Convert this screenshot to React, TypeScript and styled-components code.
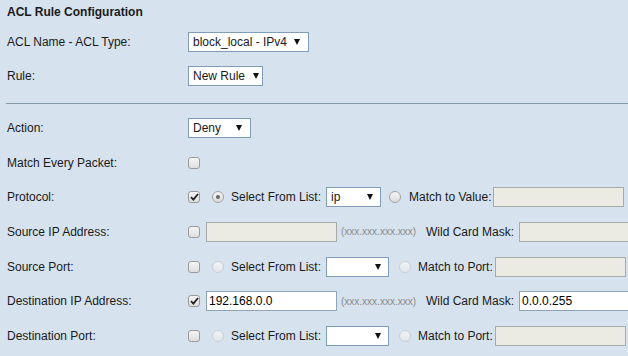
import styled, { createGlobalStyle } from "styled-components"

const GlobalStyle = createGlobalStyle`
  html, body {
    margin: 0;
    padding: 0;
    background: #d6e2ee;
    overflow: hidden;
  }
  body {
    font-family: "Liberation Sans", Arial, sans-serif;
    font-size: 12px;
    color: #1a1a1a;
  }
`

const Page = styled.div`
  width: 628px;
  height: 356px;
  padding-left: 7px;
  box-sizing: border-box;
  overflow: hidden;
`

const Title = styled.div`
  font-weight: bold;
  line-height: 24px;
  height: 25px;
`

const Row = styled.div<{ $h?: number }>`
  display: flex;
  align-items: center;
  height: ${(p) => p.$h ?? 34.67}px;
  white-space: nowrap;
`

const Label = styled.div`
  width: 181px;
  flex: none;
`

const Controls = styled.div`
  display: flex;
  align-items: center;
`

const Divider = styled.div`
  height: 1px;
  background: #8598a8;
  margin: 10px 0 6.67px -1px;
`

const SelectBox = styled.div<{ $w: number; $ml?: number; $pr?: number }>`
  display: flex;
  align-items: center;
  justify-content: space-between;
  box-sizing: border-box;
  width: ${(p) => p.$w}px;
  height: 20px;
  margin-left: ${(p) => p.$ml ?? 0}px;
  padding: 0 ${(p) => p.$pr ?? 7}px 0 4px;
  background: #fff;
  border: 1px solid #7f9db9;
  flex: none;
`

const Arrow = styled.span`
  width: 0;
  height: 0;
  border-left: 3px solid transparent;
  border-right: 3px solid transparent;
  border-top: 6px solid #111;
`

const Box = styled.span<{ $ml?: number }>`
  display: inline-flex;
  align-items: center;
  justify-content: center;
  box-sizing: border-box;
  width: 12px;
  height: 12px;
  margin-left: ${(p) => p.$ml ?? 0}px;
  border: 1px solid #9a9a9a;
  border-radius: 3px;
  background: linear-gradient(#f6f6f6, #dedede);
  flex: none;
`

const Round = styled.span<{ $on?: boolean; $off?: boolean; $ml?: number }>`
  display: inline-flex;
  align-items: center;
  justify-content: center;
  box-sizing: border-box;
  width: 12px;
  height: 12px;
  margin-left: ${(p) => p.$ml ?? 0}px;
  border-radius: 50%;
  border: 1px solid ${(p) => (p.$off ? "#c9cfd6" : "#a3a3a3")};
  background: ${(p) =>
    p.$off ? "linear-gradient(#f0f3f6, #e2e7ec)" : "linear-gradient(#f6f6f6, #dcdcdc)"};
  flex: none;

  &::after {
    content: "";
    display: ${(p) => (p.$on ? "block" : "none")};
    width: 4px;
    height: 4px;
    border-radius: 50%;
    background: #666;
  }
`

const Text = styled.span<{ $ml?: number }>`
  margin-left: ${(p) => p.$ml ?? 0}px;
  flex: none;
`

const Hint = styled.span`
  margin-left: 4px;
  font-size: 10px;
  color: #8a8a8a;
  flex: none;
`

const Field = styled.div<{ $ml?: number; $off?: boolean }>`
  box-sizing: border-box;
  width: 131px;
  height: 20px;
  margin-left: ${(p) => p.$ml ?? 0}px;
  padding-left: 2px;
  line-height: 18px;
  border: 1px solid ${(p) => (p.$off ? "#a9aaa8" : "#8ea3b6")};
  background: ${(p) => (p.$off ? "#ebebe4" : "#fff")};
  color: #000;
  flex: none;
`

function Select({ w, value, ml, pr }: { w: number; value?: string; ml?: number; pr?: number }) {
  return (
    <SelectBox $w={w} $ml={ml} $pr={pr}>
      <span>{value}</span>
      <Arrow />
    </SelectBox>
  )
}

function Check({ on, ml }: { on?: boolean; ml?: number }) {
  return (
    <Box $ml={ml}>
      {on && (
        <svg width="9" height="8" viewBox="0 0 9 8">
          <path d="M1 4.2 L3.4 6.6 L8 1" fill="none" stroke="#222" strokeWidth="1.8" />
        </svg>
      )}
    </Box>
  )
}

function PortRow({ label }: { label: string }) {
  return (
    <Row>
      <Label>{label}</Label>
      <Controls>
        <Check />
        <Round $off $ml={12} />
        <Text $ml={7}>Select From List:</Text>
        <Select w={63} ml={5} />
        <Round $off $ml={10} />
        <Text $ml={7}>Match to Port:</Text>
        <Field $off $ml={2} />
      </Controls>
    </Row>
  )
}

function AddressRow({ label, on, ip, mask }: { label: string; on?: boolean; ip?: string; mask?: string }) {
  return (
    <Row>
      <Label>{label}</Label>
      <Controls>
        <Check on={on} />
        <Field $off={!on} $ml={6}>
          {ip}
        </Field>
        <Hint>(xxx.xxx.xxx.xxx)</Hint>
        <Text $ml={10}>Wild Card Mask:</Text>
        <Field $off={!on} $ml={5}>
          {mask}
        </Field>
      </Controls>
    </Row>
  )
}

export default function App() {
  return (
    <Page>
      <GlobalStyle />
      <Title>ACL Rule Configuration</Title>
      <Row $h={34}>
        <Label>ACL Name - ACL Type:</Label>
        <Select w={121} value="block_local - IPv4" pr={8} />
      </Row>
      <Row $h={34}>
        <Label>Rule:</Label>
        <Select w={75} value="New Rule" pr={3} />
      </Row>
      <Divider />
      <Row>
        <Label>Action:</Label>
        <Select w={63} value="Deny" pr={8} />
      </Row>
      <Row>
        <Label>Match Every Packet:</Label>
        <Check />
      </Row>
      <Row>
        <Label>Protocol:</Label>
        <Controls>
          <Check on />
          <Round $on $ml={12} />
          <Text $ml={7}>Select From List:</Text>
          <Select w={55} value="ip" ml={5} />
          <Round $ml={8} />
          <Text $ml={8}>Match to Value:</Text>
          <Field $off $ml={1} />
        </Controls>
      </Row>
      <AddressRow label="Source IP Address:" />
      <PortRow label="Source Port:" />
      <AddressRow label="Destination IP Address:" on ip="192.168.0.0" mask="0.0.0.255" />
      <PortRow label="Destination Port:" />
    </Page>
  )
}
